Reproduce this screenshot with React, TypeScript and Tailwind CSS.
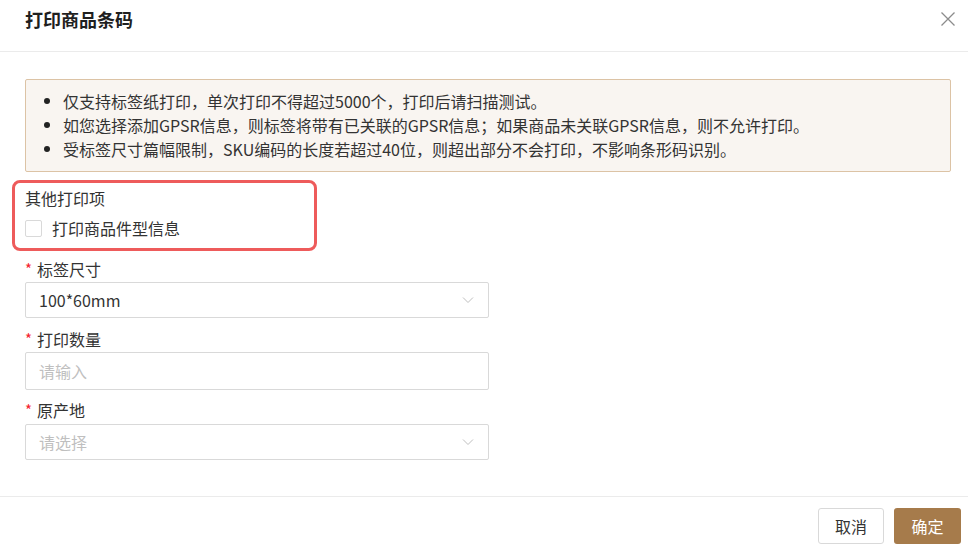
import React from "react";

const font = { fontFamily: '"Noto Sans CJK SC", "Noto Sans", sans-serif' };

function Chevron() {
  return (
    <svg width="12" height="8" viewBox="0 0 12 8" fill="none" className="text-[#bfbfbf]">
      <path d="M1 1.5 L6 6.5 L11 1.5" stroke="currentColor" strokeWidth="1" />
    </svg>
  );
}

function Label({ children }: { children: React.ReactNode }) {
  return (
    <div className="flex items-center h-[24px] text-[16px] text-[#333]">
      <span className="text-[#f5222d] w-[12px] text-[15px]">*</span>
      <span>{children}</span>
    </div>
  );
}

export default function App() {
  const tips = [
    "仅支持标签纸打印，单次打印不得超过5000个，打印后请扫描测试。",
    "如您选择添加GPSR信息，则标签将带有已关联的GPSR信息；如果商品未关联GPSR信息，则不允许打印。",
    "受标签尺寸篇幅限制，SKU编码的长度若超过40位，则超出部分不会打印，不影响条形码识别。",
  ];

  return (
    <div className="w-[968px] h-[555px] bg-white overflow-hidden relative" style={font}>
      {/* Header */}
      <div className="h-[52px] border-b border-[#ebebeb] flex items-start justify-between pl-[25px] pr-[12px] pt-[7px]">
        <h1 className="text-[18px] leading-[24px] font-bold text-[#1f1f1f]">打印商品条码</h1>
        <svg width="16" height="16" viewBox="0 0 16 16" className="mt-[4px]">
          <path d="M1.5 1.5 L14.5 14.5 M14.5 1.5 L1.5 14.5" stroke="#8c8c8c" strokeWidth="1.3" />
        </svg>
      </div>

      {/* Body */}
      <div className="h-[444px] px-[25px] pt-[27px]">
        <div className="w-[926px] border border-[#dcc3a5] bg-[#f9f5f1] rounded-[2px] pt-[9px] pb-[10px] pl-[18px]">
          {tips.map((t) => (
            <div key={t} className="flex items-center h-[24px] text-[16px] text-[#333]">
              <span className="w-[6px] h-[6px] rounded-full bg-[#222] mr-[13px]" />
              <span>{t}</span>
            </div>
          ))}
        </div>

        {/* Other print options */}
        <div className="mt-[14px] relative">
          <div className="h-[24px] leading-[24px] text-[16px] text-[#333]">其他打印项</div>
          <label className="mt-[6px] flex items-center h-[24px] text-[16px] text-[#333]">
            <span className="w-[17px] h-[17px] border border-[#d9d9d9] rounded-[2px] bg-white" />
            <span className="ml-[10px]">打印商品件型信息</span>
          </label>
          <div className="absolute left-[-13px] top-[-6px] w-[305px] h-[71px] border-[3px] border-[#ee5b5b] rounded-[8px] pointer-events-none" />
        </div>

        {/* Form */}
        <div className="w-[464px] mt-[17px]">
          <Label>标签尺寸</Label>
          <div className="mt-[1px] h-[36px] border border-[#d9d9d9] rounded-[2px] flex items-center justify-between pl-[13px] pr-[14px] text-[16px] text-[#333]">
            <span>100*60mm</span>
            <Chevron />
          </div>

          <div className="mt-[9px]">
            <Label>打印数量</Label>
          </div>
          <div className="mt-[1px] h-[38px] border border-[#d9d9d9] rounded-[2px] flex items-center pl-[13px] text-[16px] text-[#bfbfbf]">
            请输入
          </div>

          <div className="mt-[8px]">
            <Label>原产地</Label>
          </div>
          <div className="mt-[2px] h-[36px] border border-[#d9d9d9] rounded-[2px] flex items-center justify-between pl-[13px] pr-[14px] text-[16px] text-[#bfbfbf]">
            <span>请选择</span>
            <Chevron />
          </div>
        </div>
      </div>

      {/* Footer */}
      <div className="border-t border-[#ebebeb] flex justify-end gap-[10px] pt-[11px] pr-[7px]">
        <button className="w-[66px] h-[36px] border border-[#d9d9d9] rounded-[3px] bg-white text-[16px] text-[#333]">取消</button>
        <button className="w-[67px] h-[36px] rounded-[3px] bg-[#a67b4b] text-[16px] text-white">确定</button>
      </div>
    </div>
  );
}
